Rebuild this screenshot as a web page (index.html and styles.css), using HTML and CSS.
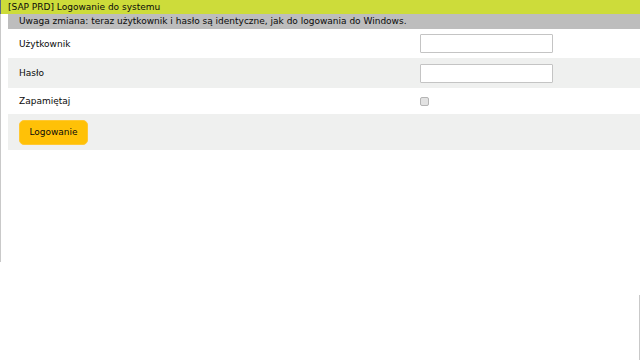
FILE: index.html
```html
<!DOCTYPE html>
<html lang="pl">
<head>
<meta charset="utf-8">
<title>[SAP PRD] Logowanie do systemu</title>
<link rel="stylesheet" href="styles.css">
</head>
<body>
<div class="titlebar">[SAP PRD] Logowanie do systemu</div>
<div class="content">
  <div class="notice">Uwaga zmiana: teraz użytkownik i hasło są identyczne, jak do logowania do Windows.</div>
  <form class="form">
    <div class="row row-user">
      <label class="label" for="user">Użytkownik</label>
      <input class="field" id="user" type="text">
    </div>
    <div class="row row-alt row-pass">
      <label class="label" for="pass">Hasło</label>
      <input class="field" id="pass" type="password">
    </div>
    <div class="row row-remember">
      <label class="label" for="remember">Zapamiętaj</label>
      <input class="check" id="remember" type="checkbox">
    </div>
    <div class="row-alt row-action">
      <button class="btn" type="button">Logowanie</button>
    </div>
  </form>
</div>
</body>
</html>
```

FILE: styles.css
```css
html, body {
  margin: 0;
  padding: 0;
  background: #ffffff;
}
body {
  position: relative;
  width: 640px;
  height: 360px;
  overflow: hidden;
  font-family: "DejaVu Sans", Verdana, sans-serif;
  font-size: 9px;
  color: #0a0a0a;
}
body::before {
  content: "";
  position: absolute;
  left: 0;
  top: 14px;
  width: 1px;
  height: 248px;
  background: #c9c9c9;
}
body::after {
  content: "";
  position: absolute;
  right: 0;
  top: 295px;
  width: 1px;
  height: 65px;
  background: #c9c9c9;
}
.titlebar {
  height: 14px;
  line-height: 14px;
  background: #cddc3a;
  color: #0a0a0a;
  border-left: 1px solid #5a6a8a;
  padding-left: 7px;
}
.content {
  margin-left: 8px;
}
.notice {
  height: 15px;
  line-height: 15px;
  padding-left: 11px;
  background: #bdbdbd;
  color: #0a0a0a;
}
.form {
  margin: 0;
}
.row {
  display: grid;
  grid-template-columns: 401px 1fr;
  align-items: center;
  padding-left: 11px;
}
.row-alt {
  background: #eff0ef;
}
.row-user {
  height: 29px;
}
.row-pass {
  height: 30px;
}
.row-remember {
  height: 26px;
}
.label {
  color: #0a0a0a;
}
.field {
  box-sizing: border-box;
  width: 133px;
  height: 19px;
  margin: 0;
  padding: 0 3px;
  border: 1px solid #c4c4c4;
  border-radius: 1px;
  background: #ffffff;
  font: inherit;
}
.check {
  appearance: none;
  -webkit-appearance: none;
  box-sizing: border-box;
  width: 9px;
  height: 9px;
  margin: 0;
  border: 1px solid #b5b5b5;
  border-radius: 2px;
  background: #e2e2e2;
}
.row-action {
  height: 36px;
  padding-left: 11px;
  display: flex;
  align-items: center;
}
.btn {
  box-sizing: border-box;
  width: 69px;
  height: 25px;
  margin: 0;
  padding: 0;
  border: 1px solid #ffc832;
  border-radius: 5px;
  background: #ffc107;
  color: #0a0a0a;
  font: inherit;
  font-size: 9px;
}
```
